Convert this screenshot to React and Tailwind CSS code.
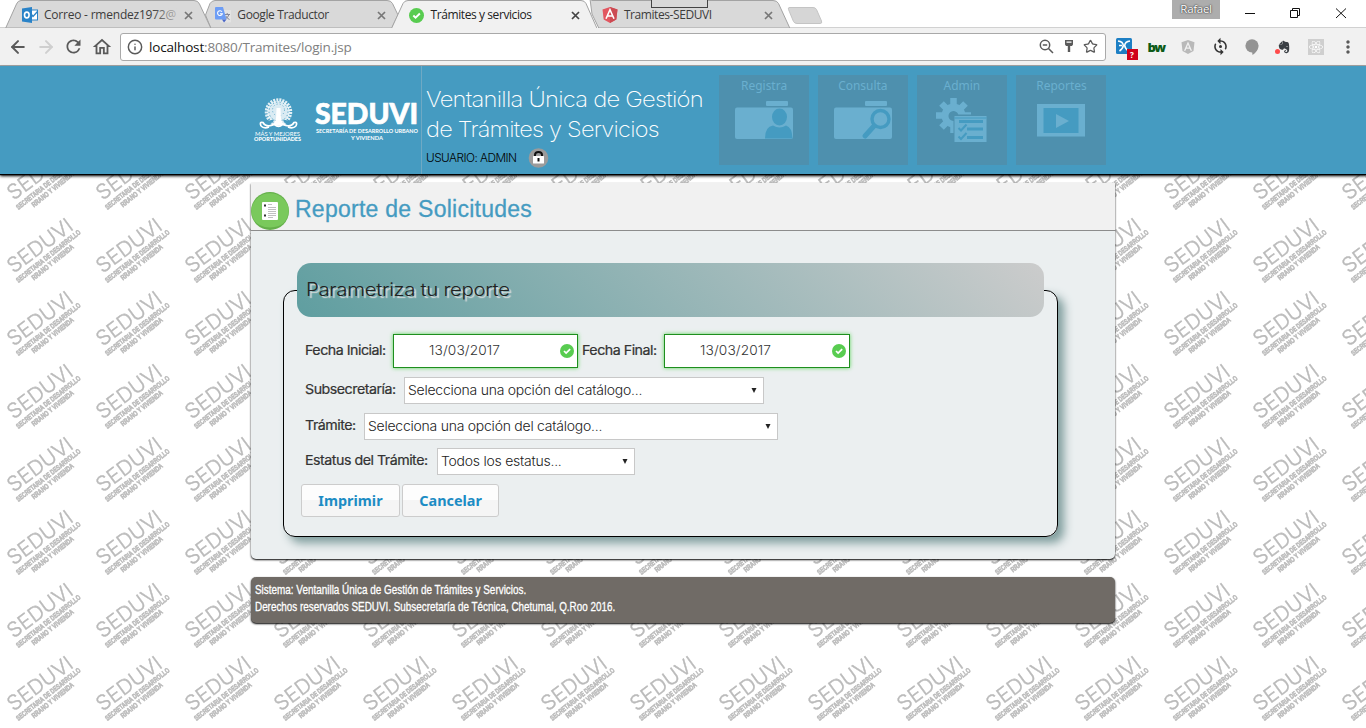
import React from "react";
import { ArrowLeft, ArrowRight, Info, Star } from "lucide-react";
import { FaAngular, FaReact, FaEvernote } from "react-icons/fa";
import { MdRefresh, MdOutlineHome, MdMoreVert, MdSync } from "react-icons/md";

const CloseX = ({ dark }) => (
  <svg width="9" height="9" viewBox="0 0 9 9" className={dark ? "text-[#444]" : "text-[#777]"}>
    <path d="M1 1 L8 8 M8 1 L1 8" stroke="currentColor" strokeWidth="1.7" />
  </svg>
);

const CheckBadge = ({ className }) => (
  <svg viewBox="0 0 16 16" className={className}>
    <circle cx="8" cy="8" r="8" fill="#58cc50" />
    <path d="M4.6 8 L7 10.4 L11.6 5.9" fill="none" stroke="#fff" strokeWidth="2" />
  </svg>
);

const OutlookIcon = () => (
  <svg width="16" height="16" viewBox="0 0 16 16">
    <rect x="8" y="3" width="7.5" height="10" fill="#fff" stroke="#2a83c8" />
    <path d="M8 5.5 L11 9.5 L15.5 4.5" fill="none" stroke="#2a83c8" strokeWidth="1.3" />
    <path d="M0 1.6 L10 0 V16 L0 14.4Z" fill="#2a83c8" />
    <ellipse cx="4.8" cy="8" rx="2.3" ry="2.9" fill="none" stroke="#fff" strokeWidth="1.6" />
  </svg>
);

const TranslateIcon = () => (
  <svg width="16" height="16" viewBox="0 0 16 16">
    <rect x="5" y="3" width="11" height="12.5" rx="1" fill="#e3e3e3" />
    <path d="M9.5 7.5 H15 M12.2 6 V7.5 M14 7.5 Q13 11 10 12 M10.8 9 Q12 11.5 14.5 12.5" stroke="#889" fill="none" />
    <path d="M1 0 H8 L11.5 12.5 H1 Q0 12.5 0 11.5 V1 Q0 0 1 0Z" fill="#6d9df5" />
    <path d="M7 12.5 H11.5 L9 15.5Z" fill="#4a66c8" />
    <path d="M7 4.8 A2.4 2.4 0 1 0 7.3 6.8 H5" fill="none" stroke="#fff" strokeWidth="1.1" />
  </svg>
);

const AngularIcon = () => (
  <svg width="16" height="16" viewBox="0 0 16 16">
    <path d="M8 0 L15.5 2.6 L14.3 12.4 L8 16 L1.7 12.4 L0.5 2.6Z" fill="#e25660" />
    <path d="M8 0 L15.5 2.6 L14.3 12.4 L8 16Z" fill="#cc4a52" />
    <path d="M4 11.8 L8 2.8 L12 11.8 M5.6 9 H10.4" fill="none" stroke="#fff" strokeWidth="1.6" />
  </svg>
);

const tabs = [
  { icon: <OutlookIcon />, title: "Correo - rmendez1972@", fade: true, cls: "tracking-[-0.22px]" },
  { icon: <TranslateIcon />, title: "Google Traductor", cls: "tracking-[-0.38px]" },
  { icon: <CheckBadge className="h-[15px] w-[15px]" />, title: "Trámites y servicios", active: true, cls: "tracking-[-0.42px]" },
  { icon: <AngularIcon />, title: "Tramites-SEDUVI", cls: "tracking-[-0.42px]" },
];

function TabStrip() {
  return (
    <div className="relative h-7 bg-white">
      <svg className="absolute inset-0" width="1366" height="28" viewBox="0 0 1366 28">
        <g stroke="#a3a3a3" strokeWidth="1" strokeLinejoin="round">
          <path d="M590 -1 L592 .5 H765 Q769 .5 770.500 3.500 L790 28.500 H599 L592 14Z" fill="none" stroke="none" />
          <path d="M590 -1 L592 .5 H773 Q777 .5 778.500 3.500 L790 28.500 H599 L592 14Z" fill="#d9d9d9" />
          <path d="M211 28.5 L205.500 15 L210 3.500 Q212 .5 215 .5 H387 Q391 .5 392.500 3.500 L398 15 L391.500 28.500Z" fill="#d9d9d9" />
          <path d="M5.500 28.500 L16.500 4 Q18 .5 21 .5 H194 Q198 .5 199.500 4 L211 28.500Z" fill="#d9d9d9" />
          <path d="M391 29.500 L403 3.500 Q404.500 .5 408 .5 H581 Q584.500 .5 586 3.500 L597.500 29.500" fill="#f1f1f1" />
          <path d="M789 7.500 H813 Q815.500 7.500 816.500 9.500 L821.500 21 Q822.500 23.500 820 23.500 H797 Q794.500 23.500 793.500 21.500 L788.500 9.500 Q788 7.500 789 7.500Z" fill="#d6d6d6" stroke="#c4c4c4" />
          <path d="M0 28 H391 M598 28 H1366" fill="none" />
        </g>
        <rect x="651.500" y="-1" width="56" height="8.500" fill="#d9d9d9" stroke="#444" />
      </svg>
      <div className="relative flex h-7 items-start pl-[22px]">
        <div className="flex pt-[7px]">
          {tabs.map((t) => (
            <div key={t.title} className="flex h-4 w-[193.3px] items-center">
              <span className="flex w-[22px]">{t.icon}</span>
              <span className="relative w-[140px] text-xs leading-4 whitespace-nowrap">
                <span className={t.cls + " " + (t.active ? "text-[#222]" : "text-[#3c3c3c]")}>{t.title}</span>
                {t.fade && <span className="absolute top-0 left-[108px] h-4 w-8 bg-linear-to-r from-transparent to-[#d9d9d9]" />}
              </span>
              <CloseX dark={t.active} />
            </div>
          ))}
        </div>
        <div className="ml-auto flex pr-5">
          <span className="mr-[25px] h-[19px] w-12 bg-[#adadad] text-center text-[11.500px] leading-[18px] tracking-[-0.3px] text-white [text-shadow:0_0_2px_#333,0_0_1px_#333]">Rafael</span>
          <svg width="101" height="19" viewBox="0 0 101 19" fill="none" stroke="#111">
            <path d="M0 13.500 H10 M91 8.500 L101 18 M101 8.500 L91 18" />
            <path d="M45.500 10.500 H52.500 V17.500 H45.500Z M47.500 10.500 V8.500 H54.500 V15.500 H52.500" />
          </svg>
        </div>
      </div>
    </div>
  );
}

const Cell = ({ children }) => <span className="flex h-7 w-8 items-center justify-center">{children}</span>;

function Toolbar() {
  return (
    <div className="flex h-[38px] items-center border-b border-[#a6a6a6] bg-[#f1f1f1] pl-2 text-[#5a5a5a]">
      <ArrowLeft size={20} strokeWidth={2.4} />
      <ArrowRight size={20} strokeWidth={2.4} className="ml-2 text-[#cfcfcf]" />
      <MdRefresh size={21} className="ml-[7px]" />
      <MdOutlineHome size={22} className="ml-[7px]" />
      <div className="ml-[7px] flex h-7 w-[986px] items-center rounded-[3px] border border-[#a9a9a9] bg-white pr-[7px] pl-[6px]">
        <Info size={16} strokeWidth={2.2} />
        <span className="ml-[6px] text-[13.500px] leading-5 tracking-[-0.170px] text-[#808080]">
          <span className="text-[#111]">localhost</span>:8080/Tramites/login.jsp
        </span>
        <svg className="ml-auto" width="15" height="15" viewBox="0 0 15 15" fill="none" stroke="currentColor" strokeWidth="1.500">
          <circle cx="6" cy="6" r="4.700" />
          <path d="M9.500 9.500 L14 14 M3.800 6 H8.200" />
        </svg>
        <svg className="ml-[11px]" width="8" height="13" viewBox="0 0 8 13" fill="currentColor">
          <path fillRule="evenodd" d="M0 0 H8 V4.500 L7 6 H5.200 V12 H2.800 V6 H1 L0 4.500Z M1.500 1.500 V2.800 H6.500 V1.500Z" />
        </svg>
        <Star size={15} strokeWidth={2} className="ml-[10px]" />
      </div>
      <div className="ml-[2px] flex items-center">
        <Cell>
          <span className="relative mt-[3px] ml-[5px] h-[20px] w-[22px]">
            <svg width="22" height="22" viewBox="0 0 22 22">
              <rect width="16" height="16" rx="1.500" fill="#1d7fc4" />
              <path d="M2 3 Q7 3.500 7.300 7.500 Q7 10.500 3.500 13 M14 3 Q9 3.500 8.700 7.500 Q9 10.500 12.500 13 M3 7.500 H6" fill="none" stroke="#fff" strokeWidth="1.600" />
              <rect x="11" y="11" width="11" height="11" fill="#d0021b" />
            </svg>
            <span className="absolute top-[11px] left-[11px] w-[11px] text-center text-[8px] leading-[11px] font-bold text-white">?</span>
          </span>
        </Cell>
        <Cell><span className="text-[13px] leading-4 font-extrabold tracking-[-1.5px] text-[#0c5a17]">bw</span></Cell>
        <Cell><FaAngular size={16} className="text-[#b9b9b9]" /></Cell>
        <Cell>
          <span className="relative flex">
            <MdSync size={19} className="text-[#333]" />
            <span className="absolute top-[8px] left-[8px] h-[3px] w-[3px] rounded-full bg-[#333]" />
          </span>
        </Cell>
        <Cell>
          <svg width="14" height="16" viewBox="0 0 14 16" fill="#939393">
            <circle cx="7" cy="6.800" r="6.600" />
            <path d="M7 12 L13 9 Q12 13 7.500 16Z" />
          </svg>
        </Cell>
        <Cell>
          <span className="relative">
            <FaEvernote size={14} className="text-[#3a3f44]" />
            <span className="absolute bottom-0 -left-0.5 h-[5px] w-[5px] rounded-full bg-[#ff4b4b]" />
          </span>
        </Cell>
        <Cell><span className="flex h-4 w-4 items-center justify-center bg-[#cfcfcf] text-white"><FaReact size={14} /></span></Cell>
        <Cell><MdMoreVert size={20} /></Cell>
      </div>
    </div>
  );
}

const OakLogo = () => (
  <svg width="50" height="46" viewBox="0 0 50 46" fill="#fff" className="overflow-visible">
    <circle cx="24.500" cy="15" r="11" fillOpacity=".8" />
    <circle cx="24.500" cy="15" r="12" fill="none" stroke="#fff" strokeWidth="3.500" strokeDasharray="2 1" strokeOpacity=".85" />
    <circle cx="24.500" cy="14.500" r="9.500" fill="none" stroke="#459bc1" strokeWidth=".9" strokeDasharray="1.300 2.200" />
    <circle cx="24.500" cy="13" r="6" fill="none" stroke="#459bc1" strokeWidth=".8" strokeDasharray="1 2.200" />
    <path d="M10 24.500 L20 22.500 L19 25.500 L11 27Z M39 24.500 L29 22.500 L30 25.500 L38 27Z" fill="#459bc1" />
    <path d="M22.500 11 H26.500 L27 22 Q28 26.500 33 28 H16 Q21 26.500 22 22Z" />
    <path d="M7 29 Q5 24.500 9 25.500 Q12 31 20.500 27.500 Q24.500 31 28.500 27.500 Q37 31 40 25.500 Q44 24.500 42 29 M7 29 Q10 32 15 30 M42 29 Q39 32 34 30" fill="none" stroke="#fff" strokeWidth="1.700" />
    <text x="1" y="38.500" fontSize="5" textLength="45" lengthAdjust="spacingAndGlyphs" fontFamily="Lato, sans-serif">MÁS Y MEJORES</text>
    <text x="0" y="43.500" fontSize="5.200" fontWeight="900" textLength="47" lengthAdjust="spacingAndGlyphs" fontFamily="Lato, sans-serif">OPORTUNIDADES</text>
  </svg>
);

const SeduviLogo = () => (
  <svg width="104" height="42" viewBox="0 0 104 42" fill="#fff" fontFamily="Lato, sans-serif" fontWeight="900" className="overflow-visible">
    <text x="0" y="23" fontSize="28.500" textLength="103" lengthAdjust="spacingAndGlyphs" stroke="#fff" strokeWidth=".7">SEDUVI</text>
    <text x="1" y="31.500" fontSize="6.300" fontWeight="700" textLength="102" lengthAdjust="spacingAndGlyphs">SECRETARÍA DE DESARROLLO URBANO</text>
    <text x="36" y="38.500" fontSize="6.300" fontWeight="700" textLength="32" lengthAdjust="spacingAndGlyphs">Y VIVIENDA</text>
  </svg>
);

const Folder = ({ children }) => (
  <svg width="58" height="40" viewBox="0 0 58 40">
    <rect x="31" y="0" width="22" height="5" rx="1" fill="#6aafcf" />
    <rect x="0" y="6.500" width="58" height="31.500" rx="2" fill="#6aafcf" />
    {children}
  </svg>
);

const menu = [
  {
    label: "Registra",
    icon: (
      <Folder>
        <ellipse cx="44.500" cy="16" rx="7.500" ry="8.500" fill="#459bc1" />
        <path d="M30 37.500 Q30 25.500 38 24.500 Q44.500 28.500 51 24.500 Q57 26 57.500 37.500Z" fill="#459bc1" />
      </Folder>
    ),
  },
  {
    label: "Consulta",
    icon: (
      <Folder>
        <circle cx="46.500" cy="18" r="8.500" fill="none" stroke="#459bc1" strokeWidth="3.400" />
        <path d="M40 25 L31 35" stroke="#459bc1" strokeWidth="5" strokeLinecap="round" />
      </Folder>
    ),
  },
  {
    label: "Admin",
    icon: (
      <svg width="52" height="46" viewBox="0 0 52 46">
        <g fill="#6aafcf">
          <path fillRule="evenodd" d="M17.500 5.500 a12 12 0 1 0 .01 0Z M17.500 13 a5 5 0 1 1 -.01 0Z" />
          <g stroke="#6aafcf" strokeWidth="6.500">
            <path d="M17.500 0 V8 M17.500 27 V35 M0 17.500 H8 M27 17.500 H35 M5.500 5.500 L10.500 10.500 M29.500 5.500 L24.500 10.500 M5.500 29.500 L10.500 24.500" />
          </g>
        </g>
        <rect x="17.500" y="16.500" width="34.500" height="28" fill="#4e90ae" />
        <rect x="18.500" y="18" width="32" height="26" fill="#6aafcf" />
        <path d="M18.500 20 H50.500" stroke="#459bc1" />
        <path d="M23 23.500 H47 M31 31 H47 M31 39.500 H47" stroke="#459bc1" strokeWidth="2.800" />
        <path d="M22.500 30 L25 32.500 L30.500 26.500 M22.500 38.500 L25 41 L30.500 35" fill="none" stroke="#459bc1" strokeWidth="2" />
      </svg>
    ),
    pull: true,
  },
  {
    label: "Reportes",
    icon: (
      <svg width="48" height="33" viewBox="0 0 48 33" className="mt-[3px]">
        <rect width="48" height="32.500" fill="#6aafcf" />
        <rect x="6.500" y="4" width="35" height="25" fill="#459bc1" />
        <path d="M19 10 L32 17 L19 24Z" fill="#6aafcf" />
      </svg>
    ),
  },
];

function Header() {
  return (
    <header className="relative flex h-[108px] bg-[#459bc1] pl-[250px] shadow-[0_2px_3px_#000,0_1px_1px_#000]">
      <div className="flex w-[172px] border-r border-[#6fa9c4] pt-[31px] pl-1">
        <OakLogo />
        <div className="ml-[11px] pt-1"><SeduviLogo /></div>
      </div>
      <div className="w-[297px] pt-[18px] pl-[4px] font-[Inter,sans-serif] whitespace-nowrap text-white">
        <h1 className="text-[22px] leading-[30px] font-extralight tracking-[-0.7px]">
          <span className="block origin-left scale-x-[1.080]">Ventanilla Única de Gestión</span>
          <span className="block origin-left scale-x-[1.068]">de Trámites y Servicios</span>
        </h1>
        <div className="flex items-center pt-[4px] text-[11px] leading-5 text-black">
          <span className="w-[101px] origin-left scale-x-[1.075] font-light tracking-[-0.5px]">USUARIO: ADMIN</span>
          <svg width="21" height="20" viewBox="0 0 21 20" className="ml-px">
            <circle cx="10.500" cy="10" r="9.800" fill="#9b9b9b" />
            <path d="M7 9 V7 Q7 4 10.500 4 Q14 4 14 7 V9" fill="none" stroke="#111" strokeWidth="2" />
            <rect x="5" y="8" width="11" height="7.500" rx=".5" fill="#fff" />
            <path d="M9.500 10 H11.500 V13.500 H9.500Z" fill="#111" />
          </svg>
        </div>
      </div>
      <nav className="flex gap-[9px] pt-[9px]">
        {menu.map((m) => (
          <div key={m.label} className="flex h-[90px] w-[90px] flex-col items-center bg-[#4e90ae] font-['Noto_Sans','Open_Sans',sans-serif] text-[#6aafcf]">
            <span className="scale-x-[0.92] text-[13px] leading-[21px]">{m.label}</span>
            <span className={m.pull ? "mt-[2px]" : "mt-[5px]"}>{m.icon}</span>
          </div>
        ))}
      </nav>
    </header>
  );
}

const Watermark = () => (
  <svg className="absolute inset-0" width="1366" height="662" viewBox="0 66 1366 662">
    <defs>
      <pattern id="seal" x="0" y="213" width="89" height="73" patternUnits="userSpaceOnUse">
        <g transform="translate(0 -213)" fill="#bababa" stroke="#bababa">
          <text transform="translate(13.500 273.800) rotate(-36.500)" fontSize="20.500" strokeWidth=".4" fontWeight="300" fontFamily="Inter, sans-serif" textLength="76" lengthAdjust="spacingAndGlyphs">SEDUVI</text>
          <g fontFamily="'Liberation Sans', sans-serif" fontWeight="700" fontSize="7.300" strokeWidth=".6">
            <text transform="translate(18.500 283) rotate(-38.500)" textLength="80" lengthAdjust="spacingAndGlyphs">SECRETARIA DE DESARROLLO</text>
            <text transform="translate(34 280.500) rotate(-39)" textLength="52" lengthAdjust="spacingAndGlyphs">RRANO Y VIVIENDA</text>
          </g>
        </g>
      </pattern>
    </defs>
    <rect x="0" y="66" width="1366" height="662" fill="url(#seal)" />
  </svg>
);

const Label = ({ children, className }) => (
  <span className={"-mt-px block text-[13px] font-normal whitespace-nowrap text-[#333] " + className}>
    <span className="inline-block origin-left scale-x-[1.095] tracking-[-0.450px] [-webkit-text-stroke:0.200px_#333]">{children}</span>
  </span>
);

const DateBox = ({ className }) => (
  <div className={"flex h-[34px] items-center border border-[#1e8f1e] bg-white pr-[3px] pl-[35px] text-[13px] text-[#333] shadow-[0_0_4px_#5cd65c] " + className}>
    <span className="origin-left scale-x-[1.055] font-light tracking-[0.100px]">13/03/2017</span>
    <CheckBadge className="ml-auto h-[14px] w-[14px]" />
  </div>
);

const SelectBox = ({ children, className }) => (
  <div className={"flex h-[27px] items-center border border-[#c8c8c8] bg-white pr-[6px] pl-[3px] text-[13px] font-light text-[#222] " + className}>
    <span className="origin-left scale-x-[1.075] tracking-[-0.220px] whitespace-nowrap">{children}</span>
    <svg className="ml-auto" width="6" height="5" viewBox="0 0 6 5"><path d="M.5 0 H5.500 L3 5Z" fill="#222" /></svg>
  </div>
);

const FormButton = ({ children, className }) => (
  <button className={"h-[33px] rounded-[3px] border border-[#cccccc] bg-linear-to-b from-[#fdfdfd] from-50% to-[#f5f5f5] to-50% font-['Noto_Sans',sans-serif] text-[15px] font-bold text-[#1c8cc4] " + className}>
    <span className="inline-block scale-x-[0.960]">{children}</span>
  </button>
);

function ReportCard() {
  return (
    <main className="relative mt-[9px] ml-[251px] h-[376px] w-[864px] rounded-b-[5px] bg-[#ebeff0] shadow-[0_1px_2px_#000]">
      <div className="flex h-[48px] items-center border-b border-[#8c8c8c] bg-[#f1f1f1]">
        <svg width="38" height="38" viewBox="0 0 38 38" className="mt-[9px]">
          <circle cx="19" cy="19" r="19" fill="#65b04b" />
          <path d="M0.300 17 A19 19 0 0 1 37.700 17 Q37.500 35 19 35.500 Q.5 35 .3 17Z" fill="#7ac95c" />
          <rect x="11" y="10" width="16" height="18" rx="1" fill="#fff" />
          <path d="M13 13.500 H15 M13 23.500 H15" stroke="#333" strokeWidth="1.800" />
          <path d="M17 12.500 H21 M17 15.500 H25 M17 17.500 H25 M17 19.500 H25 M17 21.500 H25 M17 23.500 H25 M17 25.500 H22" stroke="#c0c0c0" />
        </svg>
        <h2 className="ml-[6px] pt-[5px] font-['Liberation_Sans',sans-serif] text-[23px] leading-7 tracking-[0.260px] text-[#459bc1] [-webkit-text-stroke:0.300px_#459bc1]">Reporte de Solicitudes</h2>
      </div>
      <fieldset className="mt-8 ml-[32px] h-[274px] w-[775px] rounded-[12px] border border-black pl-[13px] font-[Inter,sans-serif] shadow-[6px_6px_10px_#7f9d9d]">
        <legend className="flex h-[54px] w-[747px] items-center rounded-[14px] bg-linear-[45deg,#5f9ea0,#cccccc] pl-[9px] text-[18px] font-light text-[#222] [text-shadow:2px_2px_1px_#ddd]">
          <span className="-mt-0.5 origin-left scale-x-[1.134] tracking-[-0.300px]">Parametriza tu reporte</span>
        </legend>
        <div className="flex flex-col pt-[17px] pl-2">
          <div className="flex h-[34px] items-center">
            <Label className="w-[88px]">Fecha Inicial:</Label>
            <DateBox className="w-[185px]" />
            <Label className="ml-[4px] w-[82px]">Fecha Final:</Label>
            <DateBox className="w-[186px]" />
          </div>
          <div className="mt-[9px] flex h-[27px] items-center">
            <Label className="w-[99px]">Subsecretaría:</Label>
            <SelectBox className="w-[360px]">Selecciona una opción del catálogo...</SelectBox>
          </div>
          <div className="mt-[9px] flex h-[27px] items-center">
            <Label className="w-[59px]">Trámite:</Label>
            <SelectBox className="w-[414px]">Selecciona una opción del catálogo...</SelectBox>
          </div>
          <div className="mt-[8px] flex h-[27px] items-center">
            <Label className="w-[132px]">Estatus del Trámite:</Label>
            <SelectBox className="w-[198px]">Todos los estatus...</SelectBox>
          </div>
          <div className="mt-[9px] -ml-1 flex gap-0.5">
            <FormButton className="w-[99px]">Imprimir</FormButton>
            <FormButton className="w-[97px]">Cancelar</FormButton>
          </div>
        </div>
      </fieldset>
    </main>
  );
}

export default function App() {
  return (
    <div className="flex h-[728px] w-[1366px] flex-col overflow-hidden bg-white font-['Open_Sans','Noto_Sans',sans-serif]">
      <TabStrip />
      <Toolbar />
      <div className="relative flex-1">
        <Watermark />
        <Header />
        <ReportCard />
        <footer className="relative mt-[18px] ml-[251px] h-[46px] w-[864px] rounded-[5px] bg-[#706b66] pt-[4px] pl-[4px] font-['Liberation_Sans',sans-serif] text-[13px] leading-[17px] whitespace-nowrap text-white shadow-[0_1px_2px_#000] [-webkit-text-stroke:0.300px_#fff]">
          <p className="origin-left scale-x-[0.763]">Sistema: Ventanilla Única de Gestión de Trámites y Servicios.</p>
          <p className="origin-left scale-x-[0.759]">Derechos reservados SEDUVI. Subsecretaría de Técnica, Chetumal, Q.Roo 2016.</p>
        </footer>
      </div>
    </div>
  );
}
